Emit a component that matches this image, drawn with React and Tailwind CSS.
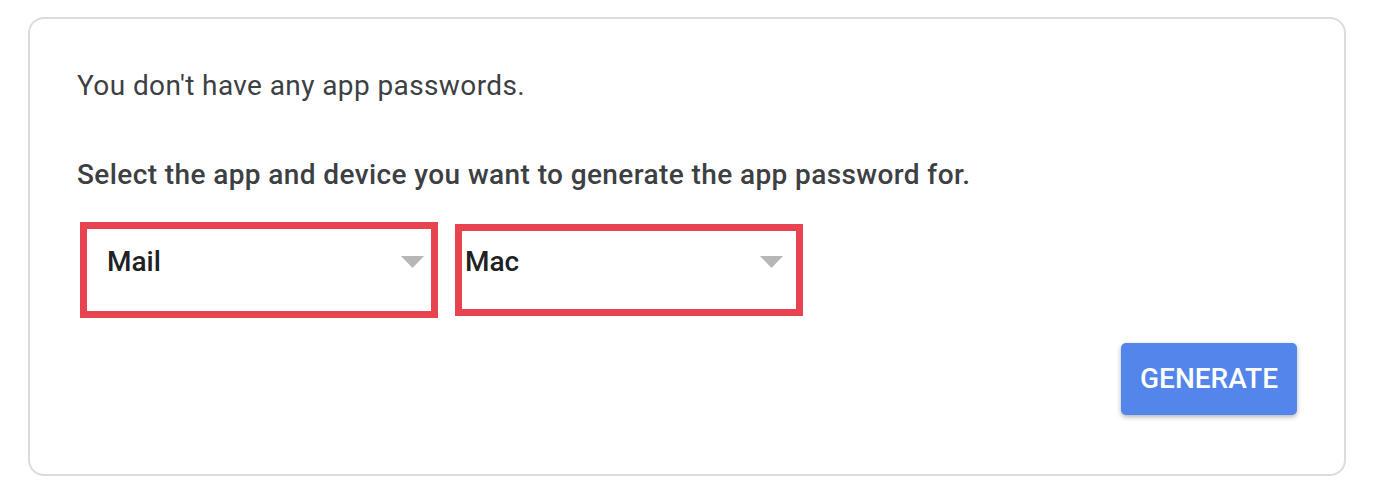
const Caret = () => (
    <svg width="23" height="12" viewBox="0 0 23 12" className="shrink-0">
        <path d="M0 0 L23 0 L11.5 12 Z" fill="#b7b7b7" />
    </svg>
);

const App = () => {
    return (
        <div className="w-[1381px] h-[496px] bg-white pt-[17px] pl-[28px] font-['Roboto',sans-serif]">
            <div className="w-[1318px] h-[459px] border-2 border-[#dadce0] rounded-[16px] pt-[49px] px-[47px]">
                <p className="text-[28px] leading-[36px] tracking-[0.4px] text-[#3c4043]">You don't have any app passwords.</p>
                <p className="mt-[53px] text-[28px] leading-[36px] tracking-[0.4px] font-medium text-[#3c4043]">
                    Select the app and device you want to generate the app password for.
                </p>

                <div className="mt-[29px] flex items-start gap-[17px] ml-[3px]">
                    <div className="w-[358px] h-[96px] border-[7px] border-[#e8444f] pt-[15px] pl-[20px] pr-[7px]">
                        <div className="h-[36px] flex items-center justify-between">
                            <span className="text-[28px] font-medium text-[#202124]">Mail</span>
                            <Caret />
                        </div>
                    </div>
                    <div className="mt-[2px] w-[348px] h-[92px] border-[7px] border-[#e8444f] pt-[13px] pl-[3px] pr-[13px]">
                        <div className="h-[36px] flex items-center justify-between">
                            <span className="text-[28px] font-medium text-[#202124]">Mac</span>
                            <Caret />
                        </div>
                    </div>
                </div>

                <div className="mt-[25px] flex justify-end">
                    <button className="w-[176px] h-[72px] rounded-[5px] bg-[#5385eb] text-white text-[28px] font-medium shadow-[0_2px_5px_rgba(0,0,0,0.3)]">
                        GENERATE
                    </button>
                </div>
            </div>
        </div>
    );
};

export default App;
